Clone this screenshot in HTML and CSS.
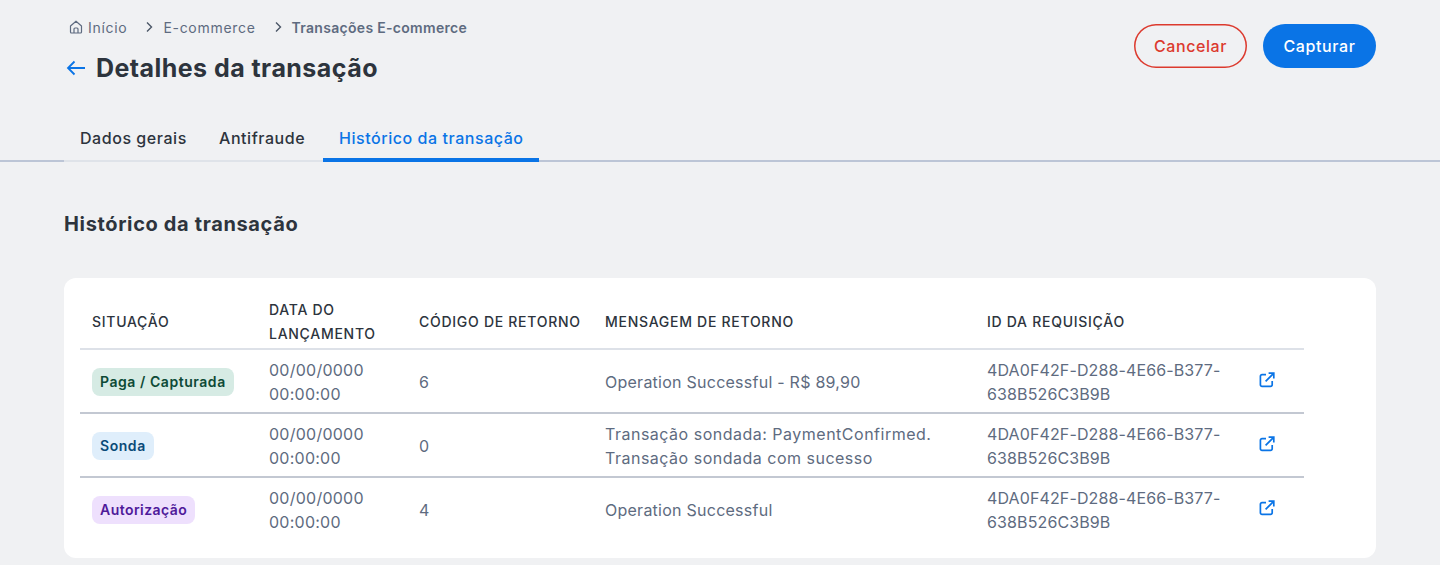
FILE: index.html
```html
<!DOCTYPE html>
<html lang="pt-BR">
<head>
<meta charset="utf-8">
<title>Detalhes da transação</title>
<link rel="stylesheet" href="styles.css">
</head>
<body>
<header class="top">
  <div class="top-left">
    <nav class="crumbs">
      <svg class="home" viewBox="0 0 16 16" width="16" height="16"><path d="M2.5 7 8 2.2 13.5 7v6a1 1 0 0 1-1 1h-9a1 1 0 0 1-1-1z M6 14V10a1 1 0 0 1 1-1h2a1 1 0 0 1 1 1v4" fill="none" stroke="currentColor" stroke-width="1.2" stroke-linejoin="round"/></svg>
      <span class="crumb">Início</span>
      <svg class="chev" viewBox="0 0 8 12" width="8" height="12"><path d="M2 1.5 6.5 6 2 10.5" fill="none" stroke="currentColor" stroke-width="1.4"/></svg>
      <span class="crumb">E-commerce</span>
      <svg class="chev" viewBox="0 0 8 12" width="8" height="12"><path d="M2 1.5 6.5 6 2 10.5" fill="none" stroke="currentColor" stroke-width="1.4"/></svg>
      <span class="crumb current">Transações E-commerce</span>
    </nav>
    <div class="title-row">
      <svg class="back" viewBox="0 0 20 16" width="20" height="16"><path d="M19 8H2M8.5 1.5 2 8l6.5 6.5" fill="none" stroke="currentColor" stroke-width="1.8"/></svg>
      <h1>Detalhes da transação</h1>
    </div>
  </div>
  <div class="actions">
    <button class="btn btn-outline">Cancelar</button>
    <button class="btn btn-solid">Capturar</button>
  </div>
</header>
<div class="tabs">
  <a class="tab">Dados gerais</a>
  <a class="tab">Antifraude</a>
  <a class="tab active">Histórico da transação</a>
</div>
<main class="content">
  <h2>Histórico da transação</h2>
  <section class="card">
    <table>
      <colgroup><col class="c1"><col class="c2"><col class="c3"><col class="c4"><col class="c5"><col class="c6"></colgroup>
      <thead>
        <tr><th>SITUAÇÃO</th><th>DATA DO LANÇAMENTO</th><th>CÓDIGO DE RETORNO</th><th>MENSAGEM DE RETORNO</th><th>ID DA REQUISIÇÃO</th><th></th></tr>
      </thead>
      <tbody>
        <tr>
          <td><span class="tag tag-green">Paga / Capturada</span></td>
          <td>00/00/0000<br>00:00:00</td>
          <td>6</td>
          <td>Operation Successful - R$ 89,90</td>
          <td class="req">4DA0F42F-D288-4E66-B377-<br>638B526C3B9B</td>
          <td class="link"><svg viewBox="0 0 16 16" width="16" height="16"><path d="M7 2.6H3a1.6 1.6 0 0 0-1.6 1.6v8.6A1.6 1.6 0 0 0 3 14.4h8.6a1.6 1.6 0 0 0 1.6-1.6V9M6.6 9.4 14.6 1.4M9.6 1.2h5.2v5.2" fill="none" stroke="currentColor" stroke-width="1.7"/></svg></td>
        </tr>
        <tr>
          <td><span class="tag tag-blue">Sonda</span></td>
          <td>00/00/0000<br>00:00:00</td>
          <td>0</td>
          <td class="msg-long">Transação sondada: PaymentConfirmed.<br>Transação sondada com sucesso</td>
          <td class="req">4DA0F42F-D288-4E66-B377-<br>638B526C3B9B</td>
          <td class="link"><svg viewBox="0 0 16 16" width="16" height="16"><path d="M7 2.6H3a1.6 1.6 0 0 0-1.6 1.6v8.6A1.6 1.6 0 0 0 3 14.4h8.6a1.6 1.6 0 0 0 1.6-1.6V9M6.6 9.4 14.6 1.4M9.6 1.2h5.2v5.2" fill="none" stroke="currentColor" stroke-width="1.7"/></svg></td>
        </tr>
        <tr>
          <td><span class="tag tag-purple">Autorização</span></td>
          <td>00/00/0000<br>00:00:00</td>
          <td>4</td>
          <td>Operation Successful</td>
          <td class="req">4DA0F42F-D288-4E66-B377-<br>638B526C3B9B</td>
          <td class="link"><svg viewBox="0 0 16 16" width="16" height="16"><path d="M7 2.6H3a1.6 1.6 0 0 0-1.6 1.6v8.6A1.6 1.6 0 0 0 3 14.4h8.6a1.6 1.6 0 0 0 1.6-1.6V9M6.6 9.4 14.6 1.4M9.6 1.2h5.2v5.2" fill="none" stroke="currentColor" stroke-width="1.7"/></svg></td>
        </tr>
      </tbody>
    </table>
  </section>
</main>
</body>
</html>
```
FILE: styles.css
```css
* { box-sizing: border-box; }
html, body { margin: 0; height: 565px; overflow: hidden; }
body { background: #f0f1f3; font-family: Inter, "Noto Sans", sans-serif; color: #2d343d; }
.top { display: flex; justify-content: space-between; padding: 15px 64px 0 66px; height: 114px; }
.crumbs { display: flex; align-items: center; height: 24px; color: #5e6b80; font-size: 14px; letter-spacing: 0.7px; white-space: nowrap; }
.home { margin-left: 2px; margin-right: 4px; color: #5e6b80; }
.chev { margin: 0 10px 0 18px; color: #4b5666; }
.current { font-weight: 600; letter-spacing: 0.3px; }
.title-row { display: flex; align-items: center; margin-top: 13px; height: 32px; }
.back { color: #0a74e6; margin-right: 10px; }
h1 { margin: 0; font-size: 25px; font-weight: 700; letter-spacing: 0.45px; color: #2d343d; }
.actions { display: flex; gap: 16px; padding-top: 9px; }
.btn { height: 44px; border: 0; border-radius: 22px; font: 500 16px Inter, sans-serif; letter-spacing: 0.6px; padding: 0; }
.btn-outline { width: 113px; background: transparent; box-shadow: inset 0 0 0 1.5px #dc3a2e; color: #dc3a2e; }
.btn-solid { width: 113px; background: #0a74e6; color: #fff; }
.tabs { display: flex; height: 48px; padding-left: 64px; border-bottom: 2px solid #bcc5d6; }
.tab { display: flex; align-items: center; height: 48px; padding: 2px 16px 0; font-size: 16px; font-weight: 500; letter-spacing: 0.55px; white-space: nowrap; color: #2d343d; border-bottom: 2px solid #dfe3e9; }
.tab:nth-child(1) { width: 139px; }
.tab:nth-child(2) { width: 120px; }
.tab.active { width: 216px; padding-top: 4px; color: #0a74e6; border-bottom: 4px solid #0a74e6; }
.content { padding: 0 64px; }
h2 { margin: 0; padding-top: 49px; height: 116px; font-size: 20px; line-height: 26px; font-weight: 700; letter-spacing: 0.64px; color: #2d343d; }
.card { background: #fff; border-radius: 12px; padding: 17px 72px 0 16px; height: 280px; }
table { width: 1224px; border-collapse: collapse; table-layout: fixed; }
.c1 { width: 177px; } .c2 { width: 150px; } .c3 { width: 186px; } .c4 { width: 382px; } .c5 { width: 260px; } .c6 { width: 69px; }
th { padding: 0 12px; height: 54px; text-align: left; font-size: 14px; font-weight: 500; line-height: 24px; color: #2d343d; letter-spacing: 0.72px; border-bottom: 2px solid #dde1e8; }
td { padding: 2px 12px 0; height: 64px; font-size: 16px; line-height: 24px; letter-spacing: 0.25px; color: #5e6b80; border-bottom: 2px solid #c3c8d2; }
.req { letter-spacing: 0.12px; }
.msg-long { letter-spacing: 0.5px; }
tbody tr:last-child td { border-bottom: 0; padding-top: 0; }
.tag { display: inline-block; height: 28px; line-height: 28px; padding: 0 8px; border-radius: 8px; font-size: 14px; font-weight: 600; letter-spacing: 0.55px; }
.tag-green { background: #d6ebe4; color: #0d4a36; }
.tag-blue { background: #dfeefb; color: #0a4a78; }
.tag-purple { background: #eee0fd; color: #4f1a9a; letter-spacing: 0.45px; }
.link { color: #0a74e6; padding-left: 0; }
.link svg { display: block; margin-left: 24px; margin-top: -5px; }
tbody tr:last-child .link svg { margin-top: -3px; }
```
